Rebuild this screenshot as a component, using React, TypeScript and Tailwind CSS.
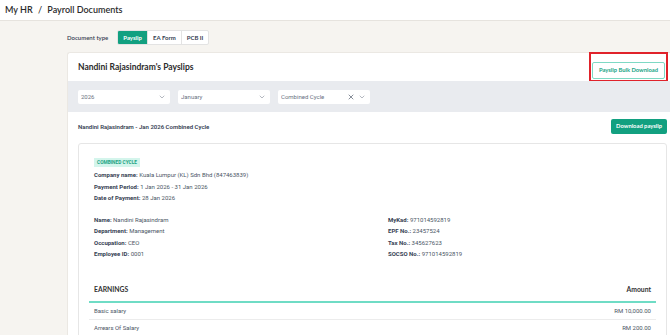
import { X, ChevronDown } from "lucide-react";

const DOC_TYPES = ["Payslip", "EA Form", "PCB II"];

const LEFT_INFO = [
  ["Name", "Nandini Rajasindram"],
  ["Department", "Management"],
  ["Occupation", "CEO"],
  ["Employee ID", "0001"],
];

const RIGHT_INFO = [
  ["MyKad", "971014592819"],
  ["EPF No.", "23457524"],
  ["Tax No.", "345627623"],
  ["SOCSO No.", "971014592819"],
];

const EARNINGS = [
  ["Basic salary", "RM 10,000.00"],
  ["Arrears Of Salary", "RM 200.00"],
];

function Select({ value, clearable }: { value: string; clearable?: boolean }) {
  return (
    <div className="w-[92px] h-[14px] bg-white rounded-[2px] flex items-center pl-[3px] pr-[4px] text-[6px] text-gray-500">
      <span className="flex-1 truncate">{value}</span>
      {clearable && <X className="w-[8px] h-[8px] text-gray-600 mr-[3px]" strokeWidth={2} />}
      <ChevronDown className="w-[8px] h-[8px] text-gray-500" strokeWidth={1.5} />
    </div>
  );
}

function Field({ label, value }: { label: string; value: string }) {
  return (
    <p className="h-[11.5px] leading-[11.5px] text-[6px] text-gray-600 whitespace-nowrap">
      <span className="font-bold text-gray-700">{label}:</span> {value}
    </p>
  );
}

export default function App() {
  return (
    <div className="w-[670px] h-[335px] overflow-hidden bg-[#f6f4f0] flex flex-col" style={{ fontFamily: "Roboto, sans-serif" }}>
      {/* Top bar */}
      <header className="h-[21px] flex-shrink-0 bg-white border-b border-[#e6e3de] flex items-center px-[5px]">
        <h1 className="text-[9px] font-semibold text-[#2b2b2b]" style={{ fontFamily: "Lato, sans-serif" }}>
          My HR <span className="mx-[3px]">/</span> Payroll Documents
        </h1>
      </header>

      <main className="flex flex-col pl-[67px] flex-shrink-0">
        {/* Document type */}
        <div className="h-[31px] flex-shrink-0 flex items-center gap-[9px] pt-[2px]" style={{ fontFamily: "Lato, sans-serif" }}>
          <span className="text-[6px] font-semibold text-gray-700">Document type</span>
          <div className="flex h-[15px] rounded-[2px] border border-[#e3e3e3] bg-white overflow-hidden">
            {DOC_TYPES.map((t, i) => (
              <div
                key={t}
                className={[
                  "h-full flex items-center text-[6px] font-bold px-[5px]",
                  i === 0 ? "bg-[#12a080] text-white" : "text-gray-700",
                  i > 0 ? "border-l border-[#e3e3e3]" : "",
                ].join(" ")}
              >
                {t}
              </div>
            ))}
          </div>
        </div>

        {/* Main card */}
        <section className="bg-white border-t border-l border-[#ebe8e3] rounded-tl-[3px] flex flex-col flex-shrink-0">
          <div className="h-[28px] flex-shrink-0 flex items-center justify-between pl-[10px] pr-[2px]">
            <h2 className="text-[8.5px] font-bold text-[#2b2b2b]" style={{ fontFamily: "Lato, sans-serif" }}>
              Nandini Rajasindram's Payslips
            </h2>
            <div className="border-2 border-[#e0222a] p-[1px]">
              <button className="h-[17px] px-[6px] border border-[#7fd9c4] rounded-[2px] text-[5.8px] font-bold text-[#18a384]" style={{ fontFamily: "Lato, sans-serif" }}>
                Payslip Bulk Download
              </button>
            </div>
          </div>

          {/* Filters */}
          <div className="h-[31px] flex-shrink-0 bg-[#e9ebef] flex items-center gap-[8px] px-[10px]">
            <Select value="2026" />
            <Select value="January" />
            <Select value="Combined Cycle" clearable />
          </div>

          {/* Payslip */}
          <div className="flex-shrink-0 flex items-center justify-between pl-[10px] pr-[3px] h-[28px]">
            <span className="text-[6px] font-semibold text-gray-700">Nandini Rajasindram - Jan 2026 Combined Cycle</span>
            <button className="h-[15px] px-[5px] bg-[#12a080] rounded-[2px] text-[5.8px] font-bold text-white" style={{ fontFamily: "Lato, sans-serif" }}>
              Download payslip
            </button>
          </div>

          <div className="ml-[10px] mr-[3px] mt-[3px] flex-shrink-0 border border-[#e6e6e6] rounded-[3px] pt-[14px] pl-[15px] pr-[10px] pb-[20px]">
            <div className="flex">
              <span className="h-[9px] leading-[9px] px-[3px] bg-[#d4f5ec] text-[#1aa383] text-[4.8px] font-bold uppercase">
                Combined Cycle
              </span>
            </div>
            <div className="mt-[2px]">
              <Field label="Company name" value="Kuala Lumpur (KL) Sdn Bhd (847463839)" />
              <Field label="Payment Period" value="1 Jan 2026 - 31 Jan 2026" />
              <Field label="Date of Payment" value="28 Jan 2026" />
            </div>

            <div className="mt-[10px] flex">
              <div className="w-[294px] flex-shrink-0">
                {LEFT_INFO.map(([l, v]) => <Field key={l} label={l} value={v} />)}
              </div>
              <div>
                {RIGHT_INFO.map(([l, v]) => <Field key={l} label={l} value={v} />)}
              </div>
            </div>

            {/* Earnings table */}
            <div className="mt-[18px] -ml-[5px]">
              <div className="h-[25px] flex items-center justify-between px-[5px] border-b-2 border-[#6fdcc5]" style={{ fontFamily: "Lato, sans-serif" }}>
                <span className="text-[6.8px] font-bold text-[#333]">EARNINGS</span>
                <span className="text-[6.8px] font-bold text-[#333]">Amount</span>
              </div>
              {EARNINGS.map(([l, v]) => (
                <div key={l} className="h-[17px] flex items-center justify-between px-[5px] border-b border-[#ececec] text-[6px] text-gray-600">
                  <span>{l}</span>
                  <span>{v}</span>
                </div>
              ))}
            </div>
          </div>
        </section>
      </main>
    </div>
  );
}
